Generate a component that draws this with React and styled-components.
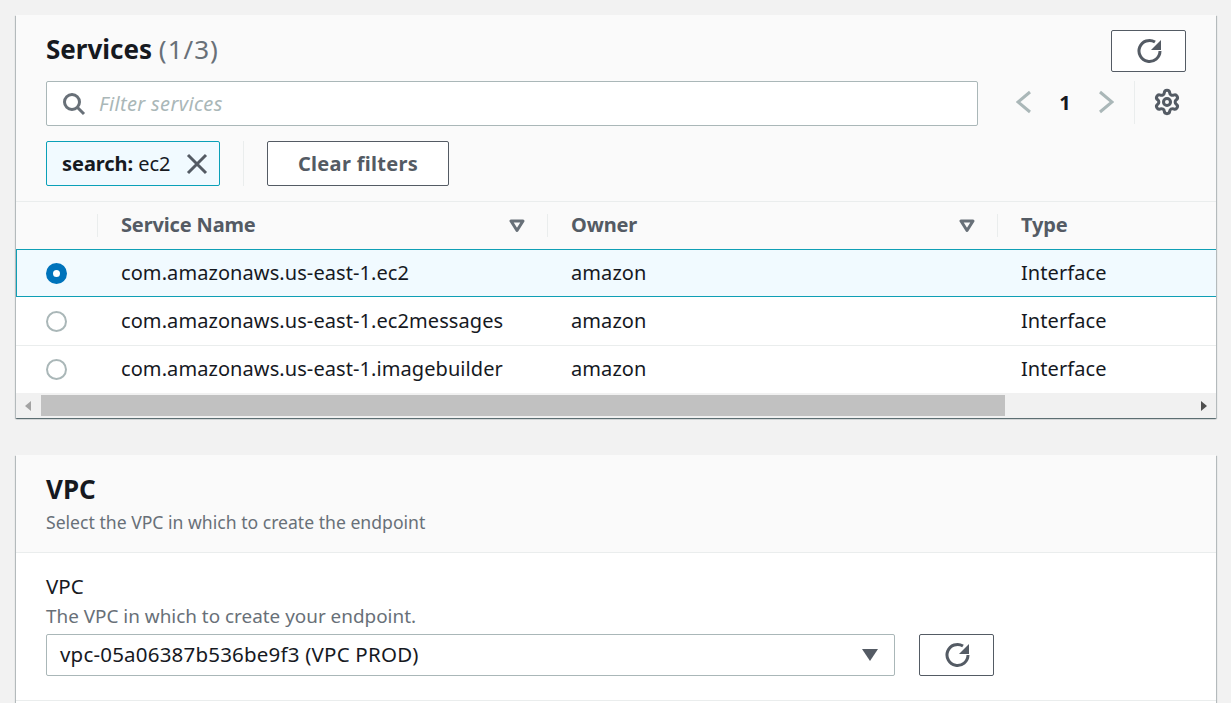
import React from 'react';
import styled, { createGlobalStyle } from 'styled-components';
import { Settings } from 'lucide-react';

const rows = [
  { name: 'com.amazonaws.us-east-1.ec2', owner: 'amazon', type: 'Interface', selected: true },
  { name: 'com.amazonaws.us-east-1.ec2messages', owner: 'amazon', type: 'Interface' },
  { name: 'com.amazonaws.us-east-1.imagebuilder', owner: 'amazon', type: 'Interface' },
];

const columns = '81px 450px 450px 1fr';

const GlobalStyle = createGlobalStyle`
  html, body {
    margin: 0;
    height: 703px;
    overflow: hidden;
    background: #f2f2f2;
    font-family: 'Noto Sans', 'Open Sans', sans-serif;
    color: #16191f;
  }
`;

const Page = styled.div`
  height: 703px;
  box-sizing: border-box;
  overflow: hidden;
  padding: 15px 15px 0 16px;
  display: flex;
  flex-direction: column;
  gap: 37px;
`;

const Card = styled.section`
  background: #fff;
  box-shadow: 0 1px 1px 0 rgba(0, 28, 36, 0.4), 1px 1px 1px 0 rgba(0, 28, 36, 0.2), -1px 1px 1px 0 rgba(0, 28, 36, 0.2);
`;

const LastCard = styled(Card)`
  flex: 1;
  min-height: 0;
`;

const Header = styled.header`
  background: #fafafa;
  padding: 15px 30px 15px 30px;
  border-bottom: 1px solid #eaeded;
`;

const TitleRow = styled.div`
  display: flex;
  justify-content: space-between;
  align-items: flex-start;
  height: 42px;
`;

const Title = styled.h2`
  margin: 0;
  font-size: 26px;
  line-height: 38px;
  font-weight: 700;
  span {
    font-weight: 400;
    color: #687078;
    letter-spacing: 1px;
  }
`;

const IconButton = styled.button`
  width: 75px;
  height: 42px;
  padding: 0;
  background: #fff;
  border: 1px solid #545b64;
  border-radius: 2px;
  display: flex;
  align-items: center;
  justify-content: center;
  color: #545b64;
`;

const FilterRow = styled.div`
  margin-top: 9px;
  display: flex;
  align-items: flex-start;
`;

const SearchBox = styled.div`
  width: 932px;
  height: 45px;
  flex: none;
  box-sizing: border-box;
  background: #fff;
  border: 1px solid #aab7b8;
  border-radius: 2px;
  display: flex;
  align-items: center;
  gap: 13px;
  padding-left: 15px;
  font-size: 20px;
  letter-spacing: 0.35px;
  font-style: italic;
  color: #aab7b8;
`;

const Pager = styled.div`
  margin-left: 38px;
  height: 42px;
  flex: none;
  display: flex;
  align-items: center;
  font-size: 20px;
`;

const PageNumber = styled.span`
  width: 66px;
  text-align: center;
  font-weight: 700;
  color: #16191f;
`;

const PagerDivider = styled.div`
  width: 1px;
  height: 43px;
  background: #eaeded;
  margin-left: 20px;
  flex: none;
`;

const GearButton = styled.div`
  margin-left: 18px;
  display: flex;
  color: #545b64;
`;

const TokenRow = styled.div`
  margin-top: 15px;
  display: flex;
  align-items: center;
`;

const Token = styled.div`
  width: 174px;
  height: 45px;
  box-sizing: border-box;
  background: #f1faff;
  border: 1px solid #0aa0b8;
  border-radius: 2px;
  display: flex;
  align-items: center;
  padding-left: 15px;
  font-size: 20px;
  letter-spacing: -0.05px;
  white-space: pre;
  b { font-weight: 700; }
  svg { margin-left: 16px; color: #545b64; flex: none; }
`;

const TokenDivider = styled.div`
  width: 1px;
  height: 45px;
  background: #eaeded;
  margin: 0 23px;
`;

const ClearButton = styled.button`
  width: 182px;
  height: 45px;
  background: #fff;
  border: 1px solid #545b64;
  border-radius: 2px;
  font-family: inherit;
  font-size: 20px;
  letter-spacing: 0.3px;
  font-weight: 700;
  color: #545b64;
`;

const HeadRow = styled.div`
  display: grid;
  grid-template-columns: ${columns};
  height: 47px;
  background: #fafafa;
  align-items: center;
  font-size: 20px;
  letter-spacing: -0.15px;
  font-weight: 700;
  color: #545b64;
`;

const HeadCell = styled.div`
  height: 23px;
  display: flex;
  align-items: center;
  justify-content: space-between;
  padding: 0 22px 0 23px;
  border-left: ${p => (p.$plain ? 'none' : '1px solid #eaeded')};
`;

const HeadLabel = styled.span`
  position: relative;
  top: -1px;
`;

const Row = styled.div`
  display: grid;
  grid-template-columns: ${columns};
  height: 48px;
  box-sizing: border-box;
  align-items: center;
  font-size: 20px;
  letter-spacing: 0.08px;
  background: ${p => (p.$selected ? '#f1faff' : '#fff')};
  border-top: 1px solid ${p => (p.$selected ? '#0f9fb5' : p.$afterSelected ? 'transparent' : '#eaeded')};
  border-bottom: 1px solid ${p => (p.$selected ? '#0f9fb5' : 'transparent')};
  box-shadow: ${p => (p.$selected ? 'inset 1px 0 0 #0f9fb5' : 'none')};
`;

const Cell = styled.div`
  padding: 0 0 2px 24px;
  white-space: nowrap;
`;

const RadioCell = styled.div`
  padding-left: 30px;
  display: flex;
`;

const Radio = styled.span`
  width: 21px;
  height: 21px;
  box-sizing: border-box;
  border-radius: 50%;
  background: #fff;
  border: ${p => (p.$checked ? '7px solid #0073bb' : '2px solid #aab7b8')};
`;

const ScrollBar = styled.div`
  height: 25px;
  box-sizing: border-box;
  background: #f1f1f1;
  padding: 2px 0 2px 0;
  display: flex;
  align-items: center;
  justify-content: space-between;
`;

const ScrollArrow = styled.span`
  width: 0;
  height: 0;
  border-top: 5px solid transparent;
  border-bottom: 5px solid transparent;
  ${p => (p.$right
    ? 'border-left: 6px solid #505050; margin-right: 9px;'
    : 'border-right: 6px solid #a3a3a3; margin-left: 9px;')}
`;

const ScrollThumb = styled.div`
  width: 964px;
  height: 21px;
  background: #c1c1c1;
  margin: 0 auto 0 10px;
`;

const SectionHeader = styled.header`
  background: #fafafa;
  border-bottom: 1px solid #eaeded;
  padding: 15px 30px 16px;
  height: 98px;
  box-sizing: border-box;
`;

const SectionTitle = styled.h2`
  margin: 0;
  font-size: 26px;
  line-height: 38px;
  font-weight: 700;
`;

const SectionDesc = styled.p`
  margin: 3px 0 0;
  font-size: 17.6px;
  line-height: 22px;
  color: #687078;
`;

const Body = styled.div`
  padding: 21px 30px 24px;
  border-bottom: 1px solid #eaeded;
`;

const Label = styled.div`
  font-size: 20.5px;
  line-height: 24px;
`;

const Hint = styled.div`
  font-size: 18.9px;
  line-height: 22px;
  margin-top: 7px;
  color: #687078;
`;

const SelectRow = styled.div`
  margin-top: 7px;
  display: flex;
  gap: 24px;
`;

const Select = styled.div`
  width: 849px;
  height: 42px;
  box-sizing: border-box;
  border: 1px solid #aab7b8;
  border-radius: 2px;
  display: flex;
  align-items: center;
  justify-content: space-between;
  padding: 0 16px 2px 13px;
  font-size: 20.5px;
  letter-spacing: 0.2px;
`;

const Caret = styled.span`
  width: 0;
  height: 0;
  margin-top: 2px;
  border-left: 8px solid transparent;
  border-right: 8px solid transparent;
  border-top: 12px solid #545b64;
`;

function RefreshIcon() {
  return (
    <svg width="26" height="26" viewBox="0 0 26 26" fill="none">
      <path d="M19 4A10.5 10.5 0 1 0 24 13" stroke="currentColor" strokeWidth="3" />
      <path d="M25 2v10H15z" fill="currentColor" />
    </svg>
  );
}

function SearchIcon() {
  return (
    <svg width="24" height="24" viewBox="0 0 24 24" fill="none" stroke="#687078" strokeWidth="3">
      <circle cx="10" cy="10" r="7.5" />
      <path d="M15.5 15.5 22 22" />
    </svg>
  );
}

function Chevron({ right }) {
  return (
    <svg width="16" height="24" viewBox="0 0 16 24" fill="none" stroke="#aab7b8" strokeWidth="3">
      <path d={right ? 'M2 2l12 10L2 22' : 'M14 2L2 12l12 10'} />
    </svg>
  );
}

function FilterCaret() {
  return (
    <svg width="16" height="14" viewBox="0 0 16 14" fill="none" stroke="#687078" strokeWidth="3">
      <path d="M2 2h12l-6 9.5z" strokeLinejoin="round" />
    </svg>
  );
}

export default function App() {
  return (
    <>
      <GlobalStyle />
      <Page>
        <Card>
          <Header>
            <TitleRow>
              <Title>Services <span>(1/3)</span></Title>
              <IconButton aria-label="Refresh"><RefreshIcon /></IconButton>
            </TitleRow>
            <FilterRow>
              <SearchBox><SearchIcon />Filter services</SearchBox>
              <Pager>
                <Chevron />
                <PageNumber>1</PageNumber>
                <Chevron right />
                <PagerDivider />
                <GearButton><Settings size={28} strokeWidth={2.6} /></GearButton>
              </Pager>
            </FilterRow>
            <TokenRow>
              <Token>
                <b>search:</b> ec2
                <svg width="22" height="22" viewBox="0 0 22 22" stroke="currentColor" strokeWidth="3">
                  <path d="M2 2l18 18M20 2L2 20" />
                </svg>
              </Token>
              <TokenDivider />
              <ClearButton>Clear filters</ClearButton>
            </TokenRow>
          </Header>
          <HeadRow>
            <HeadCell $plain />
            <HeadCell><HeadLabel>Service Name</HeadLabel><FilterCaret /></HeadCell>
            <HeadCell><HeadLabel>Owner</HeadLabel><FilterCaret /></HeadCell>
            <HeadCell><HeadLabel>Type</HeadLabel></HeadCell>
          </HeadRow>
          {rows.map((row, i) => (
            <Row key={row.name} $selected={row.selected} $afterSelected={i > 0 && rows[i - 1].selected}>
              <RadioCell><Radio $checked={row.selected} /></RadioCell>
              <Cell>{row.name}</Cell>
              <Cell>{row.owner}</Cell>
              <Cell>{row.type}</Cell>
            </Row>
          ))}
          <ScrollBar>
            <ScrollArrow />
            <ScrollThumb />
            <ScrollArrow $right />
          </ScrollBar>
        </Card>
        <LastCard>
          <SectionHeader>
            <SectionTitle>VPC</SectionTitle>
            <SectionDesc>Select the VPC in which to create the endpoint</SectionDesc>
          </SectionHeader>
          <Body>
            <Label>VPC</Label>
            <Hint>The VPC in which to create your endpoint.</Hint>
            <SelectRow>
              <Select>vpc-05a06387b536be9f3 (VPC PROD)<Caret /></Select>
              <IconButton aria-label="Refresh"><RefreshIcon /></IconButton>
            </SelectRow>
          </Body>
        </LastCard>
      </Page>
    </>
  );
}
